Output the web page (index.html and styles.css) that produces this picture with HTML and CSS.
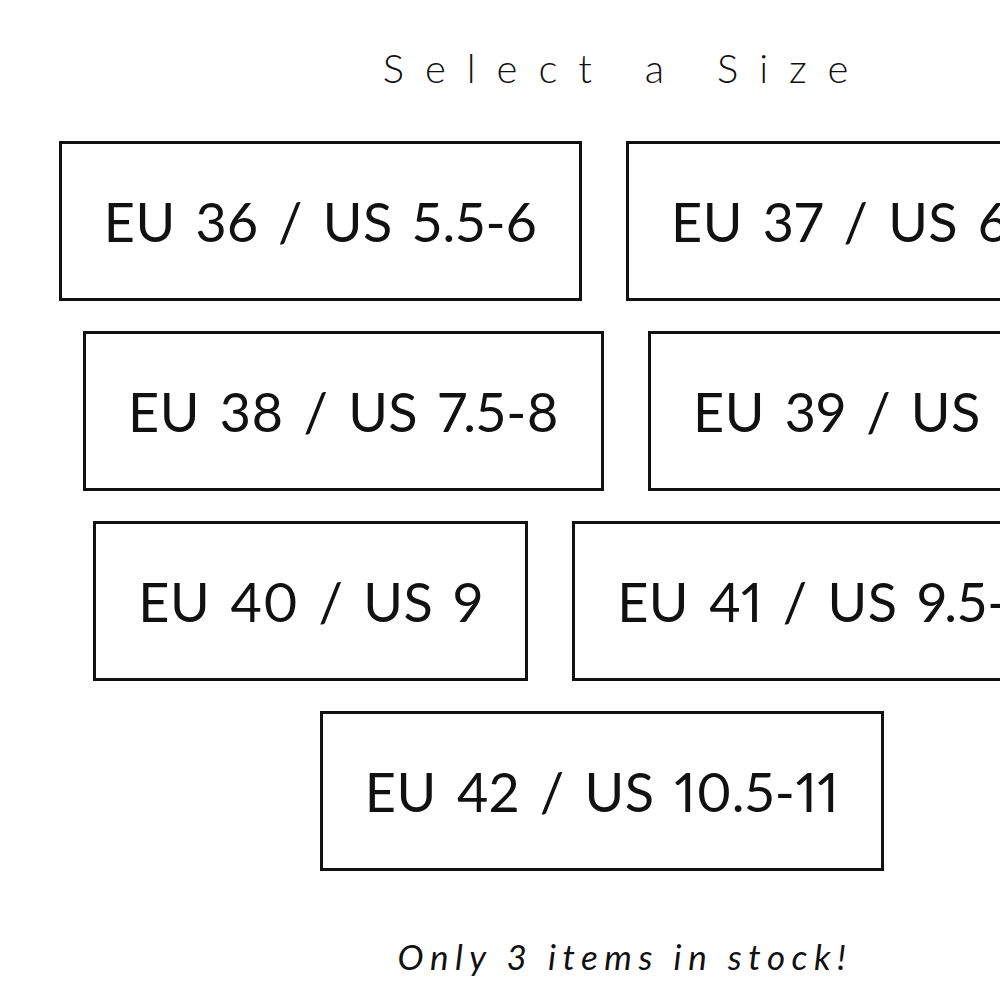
FILE: index.html
```html
<!DOCTYPE html>
<html lang="en">
<head>
    <meta charset="UTF-8">
    <meta name="viewport" content="width=device-width, initial-scale=1.0">
    <title>Select a Size</title>
    <link rel="stylesheet" href="styles.css">
</head>
<body>
    <div class="viewport">
        <div class="size-picker">
            <h2 class="picker-title">Select a Size</h2>

            <div class="size-list">
                <button class="size-option">EU 36 / US 5.5-6</button>
                <button class="size-option">EU 37 / US 6.5-7</button>
                <button class="size-option">EU 38 / US 7.5-8</button>
                <button class="size-option">EU 39 / US 8.5</button>
                <button class="size-option">EU 40 / US 9</button>
                <button class="size-option">EU 41 / US 9.5-10</button>
                <button class="size-option">EU 42 / US 10.5-11</button>
            </div>

            <p class="stock-note">Only 3 items in stock!</p>
        </div>
    </div>
</body>
</html>
```

FILE: styles.css
```css
body {
    margin: 0;
    background: #fff;
    color: #111;
    font-family: Lato, "Open Sans", sans-serif;
}
.viewport {
    width: 1000px;
    overflow: hidden;
}
.size-picker {
    width: 1204px;
}
.picker-title {
    margin: 0;
    padding: 44px 0 0 48px;
    text-align: center;
    font-size: 40px;
    font-weight: 300;
    letter-spacing: 21px;
    line-height: 48px;
}
.size-list {
    display: flex;
    flex-wrap: wrap;
    justify-content: center;
    gap: 30px 44px;
    margin-top: 49px;
}
.size-option {
    display: flex;
    align-items: center;
    box-sizing: border-box;
    height: 160px;
    padding: 0 42px;
    border: 3px solid #111;
    background: #fff;
    color: #111;
    font-family: inherit;
    font-size: 54px;
    font-weight: 400;
    font-variant-numeric: proportional-nums;
    letter-spacing: 0.5px;
    word-spacing: 5.5px;
    cursor: pointer;
}
.stock-note {
    margin: 65px 0 0;
    padding-left: 46px;
    text-align: center;
    font-size: 35px;
    line-height: 40px;
    font-style: italic;
    letter-spacing: 6.5px;
}
```
